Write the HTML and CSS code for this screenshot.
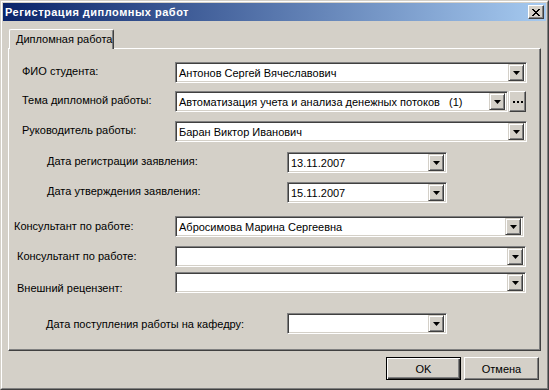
FILE: index.html
```html
<!DOCTYPE html>
<html lang="ru">

<head>
    <meta charset="UTF-8">
    <title>Регистрация дипломных работ</title>
    <link rel="stylesheet" href="styles.css">
</head>

<body>
    <div class="window">
        <div class="frame">
            <div class="titlebar">
                <span class="title">Регистрация дипломных работ</span>
                <span class="close-btn">
                    <svg width="8" height="7" viewBox="0 0 8 7">
                        <path d="M0 0h2v1h1v1h2v-1h1v-1h2v1h-1v1h-1v1h-1v1h1v1h1v1h1v1h-2v-1h-1v-1h-2v1h-1v1h-2v-1h1v-1h1v-1h1v-1h-1v-1h-1v-1h-1z" fill="#000"/>
                    </svg>
                </span>
            </div>

            <div class="content">
                <div class="tabs">
                    <div class="tab">Дипломная работа</div>
                </div>

                <div class="panel">
                    <div class="row row-1">
                        <span class="label">ФИО студента:</span>
                        <div class="combo combo-wide"><span class="combo-text">Антонов Сергей Вячеславович</span><span class="combo-arrow"></span></div>
                    </div>
                    <div class="row row-2">
                        <span class="label">Тема дипломной работы:</span>
                        <div class="combo combo-theme"><span class="combo-text">Автоматизация учета и анализа денежных потоков&nbsp;&nbsp;&nbsp;(1)</span><span class="combo-arrow"></span></div>
                        <span class="dots-btn"><i></i><i></i><i></i></span>
                    </div>
                    <div class="row row-3">
                        <span class="label">Руководитель работы:</span>
                        <div class="combo combo-wide"><span class="combo-text">Баран Виктор Иванович</span><span class="combo-arrow"></span></div>
                    </div>
                    <div class="row row-4">
                        <span class="label label-date">Дата регистрации заявления:</span>
                        <div class="combo combo-date"><span class="combo-text">13.11.2007</span><span class="combo-arrow"></span></div>
                    </div>
                    <div class="row row-5">
                        <span class="label label-date">Дата утверждения заявления:</span>
                        <div class="combo combo-date"><span class="combo-text">15.11.2007</span><span class="combo-arrow"></span></div>
                    </div>
                    <div class="row row-6">
                        <span class="label label-left">Консультант по работе:</span>
                        <div class="combo combo-narrow"><span class="combo-text">Абросимова Марина Сергеевна</span><span class="combo-arrow"></span></div>
                    </div>
                    <div class="row row-7">
                        <span class="label label-mid">Консультант по работе:</span>
                        <div class="combo combo-wide2"><span class="combo-text"></span><span class="combo-arrow"></span></div>
                    </div>
                    <div class="row row-8">
                        <span class="label label-mid label-low">Внешний рецензент:</span>
                        <div class="combo combo-wide2"><span class="combo-text"></span><span class="combo-arrow"></span></div>
                    </div>
                    <div class="row row-9">
                        <span class="label label-date2">Дата поступления работы на кафедру:</span>
                        <div class="combo combo-date"><span class="combo-text"></span><span class="combo-arrow"></span></div>
                    </div>
                </div>

                <div class="buttons">
                    <button class="btn btn-default">OK</button>
                    <button class="btn">Отмена</button>
                </div>
            </div>
        </div>
    </div>
</body>

</html>
```

FILE: styles.css
```css
* {
    margin: 0;
    padding: 0;
    box-sizing: border-box;
}

body {
    width: 549px;
    height: 390px;
    overflow: hidden;
    font-family: 'Liberation Sans', Arial, sans-serif;
    font-size: 11px;
    color: #000;
    background: #d4d0c8;
}

.window {
    width: 549px;
    height: 390px;
    border: 1px solid;
    border-color: #d4d0c8 #404040 #404040 #d4d0c8;
}

.frame {
    height: 100%;
    padding: 1px;
    border: 1px solid;
    border-color: #fff #808080 #808080 #fff;
    display: flex;
    flex-direction: column;
}

.titlebar {
    height: 18px;
    display: flex;
    align-items: center;
    justify-content: space-between;
    padding: 0 2px 0 2px;
    background: linear-gradient(to right, #0a246a 0%, #a6caf0 100%);
}

.title {
    color: #fff;
    font-weight: bold;
    font-size: 11px;
    letter-spacing: 0.5px;
}

.close-btn {
    width: 16px;
    height: 14px;
    display: flex;
    align-items: center;
    justify-content: center;
    background: #d4d0c8;
    border: 1px solid;
    border-color: #fff #404040 #404040 #fff;
    box-shadow: inset -1px -1px #808080;
}

.content {
    flex: 1;
    padding: 8px 5px 0 5px;
    display: flex;
    flex-direction: column;
}

/* вкладки */
.tabs {
    display: flex;
    padding-left: 1px;
    height: 19px;
    position: relative;
    z-index: 1;
}

.tab {
    width: 105px;
    height: 20px;
    padding: 3px 0 0 6px;
    background: #d4d0c8;
    border: 1px solid;
    border-bottom: none;
    border-color: #fff #404040 #d4d0c8 #fff;
    border-radius: 2px 2px 0 0;
    box-shadow: inset -1px 0 #808080;
}

.panel {
    height: 303px;
    border: 1px solid;
    border-color: #fff #404040 #404040 #fff;
    box-shadow: inset -1px -1px #808080;
    padding: 0 0 0 1px;
    display: flex;
    flex-direction: column;
}

.row {
    display: flex;
    align-items: center;
    height: 21px;
}

.row-1 { margin-top: 13px; }
.row-2 { margin-top: 8px; }
.row-3 { margin-top: 9px; }
.row-4 { margin-top: 10px; }
.row-5 { margin-top: 9px; }
.row-6 { margin-top: 13px; }
.row-7 { margin-top: 9px; }
.row-8 { margin-top: 5px; }
.row-9 { margin-top: 20px; }

.label {
    width: 165px;
    padding-left: 12px;
    margin-top: -3px;
    white-space: nowrap;
}

.label-date {
    width: 277px;
    padding-left: 37px;
}

.label-date2 {
    width: 277px;
    padding-left: 36px;
    margin-top: 0;
}

.label-left {
    padding-left: 4px;
    margin-top: -2px;
}

.label-mid {
    padding-left: 7px;
    margin-top: -1px;
}

.label-low {
    margin-top: 10px;
}

/* выпадающие списки */
.combo {
    height: 21px;
    display: flex;
    align-items: center;
    background: #fff;
    border: 1px solid;
    border-color: #808080 #fff #fff #808080;
    box-shadow: inset 1px 1px #404040, inset -1px -1px #d4d0c8;
    padding: 2px;
}

.combo-wide { width: 352px; }
.combo-wide2 { width: 351px; }
.combo-narrow { width: 349px; }
.combo-theme { width: 333px; }
.combo-date { width: 160px; }

.combo-text {
    flex: 1;
    padding-left: 1px;
    white-space: nowrap;
    overflow: hidden;
}

.combo-arrow {
    width: 16px;
    height: 17px;
    position: relative;
    background: #d4d0c8;
    border: 1px solid;
    border-color: #d4d0c8 #404040 #404040 #d4d0c8;
    box-shadow: inset 1px 1px #fff, inset -1px -1px #808080;
}

.combo-arrow::after {
    content: '';
    position: absolute;
    left: 4px;
    top: 6px;
    width: 7px;
    height: 4px;
    background: #000;
    clip-path: polygon(0 0, 100% 0, 50% 100%);
}

.dots-btn {
    width: 17px;
    height: 21px;
    margin-left: 1px;
    display: flex;
    align-items: center;
    justify-content: center;
    gap: 2px;
    padding-top: 1px;
    border: 1px solid;
    border-color: #fff #404040 #404040 #fff;
    box-shadow: inset -1px -1px #808080;
}

.dots-btn i {
    width: 2px;
    height: 2px;
    background: #000;
}

/* кнопки */
.buttons {
    display: flex;
    justify-content: flex-end;
    gap: 3px;
    padding: 6px 2px 0 0;
}

.btn {
    width: 75px;
    height: 23px;
    font-family: inherit;
    font-size: 11px;
    background: #d4d0c8;
    border: 1px solid;
    border-color: #fff #404040 #404040 #fff;
    box-shadow: inset -1px -1px #808080;
}

.btn-default {
    border: 1px solid #000;
    box-shadow: inset 1px 1px #fff, inset -1px -1px #404040, inset -2px -2px #808080;
}
```
